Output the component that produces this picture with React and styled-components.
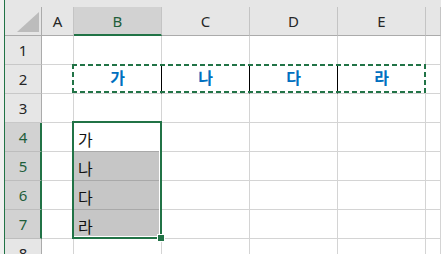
import React from "react";
import styled, { createGlobalStyle, css } from "styled-components";

const GREEN = "#217346";
const HEADER_BG = "#e6e6e6";
const HEADER_SEL_BG = "#d2d2d2";
const GRID = "#d4d4d4";
const SEL_FILL = "#c6c6c6";
const SEL_GRID = "#a9a9a9";

const GlobalStyle = createGlobalStyle`
  html, body { margin: 0; padding: 0; background: #fff; overflow: hidden; }
  * { box-sizing: border-box; }
`;

const Frame = styled.div`
  display: flex;
  width: 441px;
  height: 254px;
  overflow: hidden;
  background: #fff;
`;

const WindowEdge = styled.div`
  width: 5px;
  flex: none;
  background: #f0f0f0;
  border-right: 1px solid ${GREEN};
`;

const Sheet = styled.div`
  position: relative;
  flex: 1;
  display: grid;
  grid-template-columns: 37px 32px 88px 88px 88px 88px 1fr;
  grid-template-rows: 7px 29px repeat(8, 29px);
  align-content: start;
  font-family: "Noto Sans", "Noto Sans CJK KR", sans-serif;
`;

const TopStrip = styled.div`
  grid-column: 1 / -1;
  background: ${HEADER_BG};
`;

const Corner = styled.div`
  position: relative;
  background: ${HEADER_BG};
  border-right: 1px solid #ababab;
  border-bottom: 1px solid #ababab;
  display: flex;
  align-items: flex-end;
  justify-content: flex-end;
  padding: 0 2px 3px 0;
`;

const ColHeader = styled.div`
  background: ${(p) => (p.$selected ? HEADER_SEL_BG : HEADER_BG)};
  border-right: 1px solid #c4c4c4;
  border-bottom: ${(p) => (p.$selected ? `2px solid ${GREEN}` : "1px solid #ababab")};
  color: ${(p) => (p.$selected ? "#1e5e3a" : "#262626")};
  font-size: 15px;
  line-height: 1;
  display: flex;
  align-items: center;
  justify-content: center;
  padding-top: ${(p) => (p.$selected ? "1px" : "0")};
`;

const RowHeader = styled.div`
  background: ${(p) => (p.$selected ? HEADER_SEL_BG : HEADER_BG)};
  border-right: ${(p) => (p.$selected ? `2px solid ${GREEN}` : "1px solid #ababab")};
  border-bottom: 1px solid ${(p) => (p.$selected ? "#bdbdbd" : "#c8c8c8")};
  color: ${(p) => (p.$selected ? "#1e5e3a" : "#262626")};
  font-size: 15px;
  line-height: 1;
  display: flex;
  align-items: center;
  justify-content: center;
  padding-left: ${(p) => (p.$selected ? "1px" : "0")};
`;

const Cell = styled.div`
  border-right: 1px solid ${GRID};
  border-bottom: 1px solid ${GRID};
  display: flex;
  align-items: center;
  font-family: "Noto Sans CJK KR", "Noto Sans", sans-serif;
  font-size: 16px;
  line-height: 1;
  color: #111;
  overflow: hidden;
  white-space: nowrap;

  ${(p) =>
    p.$boxed &&
    css`
      justify-content: center;
      font-weight: 700;
      color: #0070c0;
      padding-bottom: 4px;
      border-right-color: ${p.$last ? GRID : "#000"};
    `}

  ${(p) =>
    p.$list &&
    css`
      padding-left: 4px;
      padding-top: 3px;
      border-bottom-color: ${SEL_GRID};
      background: ${p.$shaded ? SEL_FILL : "#fff"};
    `}
`;

const MarchingAnts = styled.div`
  position: absolute;
  left: 67px;
  top: 64px;
  width: 354px;
  height: 29px;
  pointer-events: none;
  background:
    repeating-linear-gradient(90deg, ${GREEN} 0 5px, #fff 5px 8px) left top / 100% 2px no-repeat,
    repeating-linear-gradient(90deg, ${GREEN} 0 5px, #fff 5px 8px) left bottom / 100% 2px no-repeat,
    repeating-linear-gradient(180deg, ${GREEN} 0 5px, #fff 5px 8px) left top / 2px 100% no-repeat,
    repeating-linear-gradient(180deg, ${GREEN} 0 5px, #fff 5px 8px) right top / 2px 100% no-repeat;
`;

const SelectionBox = styled.div`
  position: absolute;
  left: 67px;
  top: 121px;
  width: 90px;
  height: 118px;
  border: 2px solid ${GREEN};
  box-shadow: inset -1px -1px 0 #fff;
  pointer-events: none;
`;

const FillHandle = styled.div`
  position: absolute;
  left: 152px;
  top: 234px;
  width: 8px;
  height: 8px;
  background: ${GREEN};
  border: 1px solid #fff;
`;

const columns = ["A", "B", "C", "D", "E", "F"];
const boxed = ["가", "나", "다", "라"];

function CornerTriangle() {
  return (
    <svg width="22" height="20" viewBox="0 0 22 20">
      <polygon points="0,20 22,20 22,0" fill="#bcbcbc" />
    </svg>
  );
}

export default function App() {
  const rows = [1, 2, 3, 4, 5, 6, 7, 8];
  return (
    <>
      <GlobalStyle />
      <Frame>
        <WindowEdge />
        <Sheet>
          <TopStrip />
          <Corner>
            <CornerTriangle />
          </Corner>
          {columns.map((c) => (
            <ColHeader key={c} $selected={c === "B"}>
              {c === "F" ? "" : c}
            </ColHeader>
          ))}
          {rows.map((r) => (
            <React.Fragment key={r}>
              <RowHeader $selected={r >= 4 && r <= 7}>{r}</RowHeader>
              {columns.map((c, ci) => {
                if (r === 2 && ci >= 1 && ci <= 4) {
                  return (
                    <Cell key={c} $boxed $last={ci === 4}>
                      {boxed[ci - 1]}
                    </Cell>
                  );
                }
                if (c === "B" && r >= 4 && r <= 7) {
                  return (
                    <Cell key={c} $list $shaded={r > 4}>
                      {boxed[r - 4]}
                    </Cell>
                  );
                }
                return <Cell key={c} />;
              })}
            </React.Fragment>
          ))}
          <MarchingAnts />
          <SelectionBox />
          <FillHandle />
        </Sheet>
      </Frame>
    </>
  );
}
